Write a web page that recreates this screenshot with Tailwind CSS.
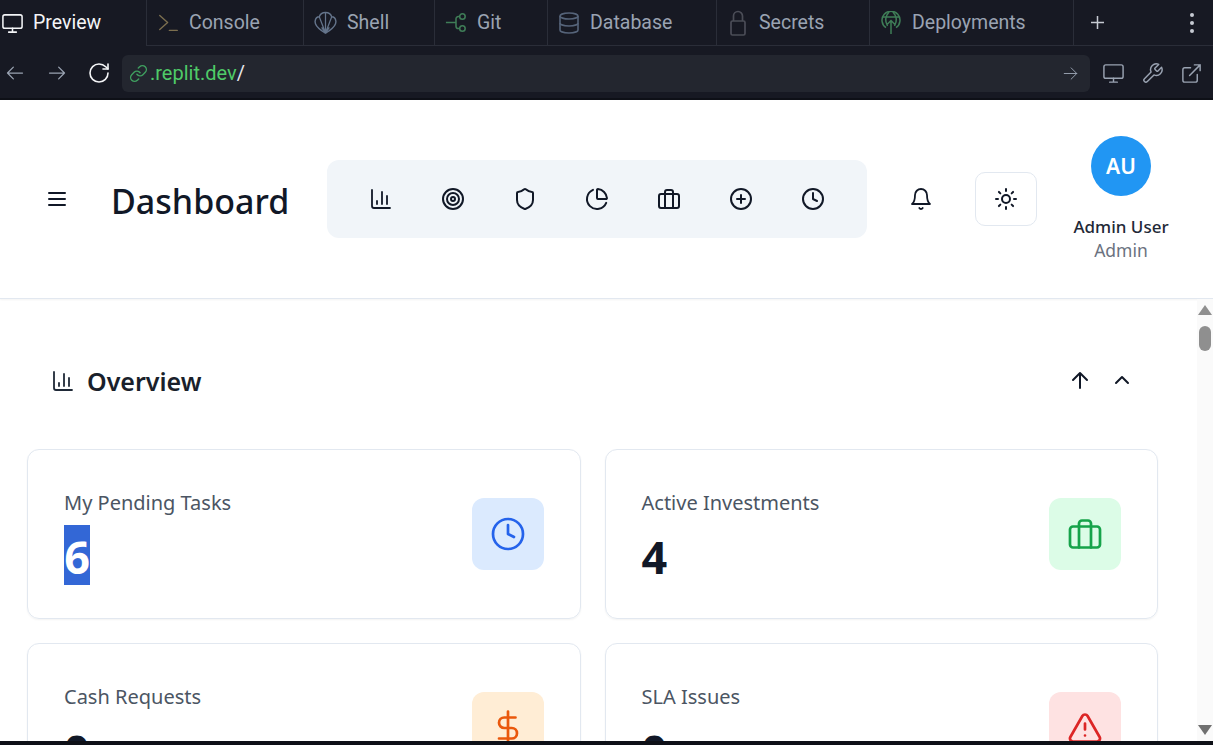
<!DOCTYPE html>
<html lang="en">
<head>
  <meta charset="UTF-8">
  <meta name="viewport" content="width=device-width, initial-scale=1.0">
  <title>Dashboard</title>
  <script src="https://cdn.jsdelivr.net/npm/@tailwindcss/browser@4"></script>
</head>
<body class="bg-white font-['Noto_Sans',sans-serif]">
  <div class="w-[1213px] h-[745px] flex flex-col overflow-hidden">

    <!-- Tabs -->
    <div class="h-[46px] shrink-0 flex bg-[#171923] text-[19.5px] text-[#9aa3b2] font-['Roboto',sans-serif]">
      <div class="w-[147px] flex items-center gap-[9px] pl-[1px] text-[#f4f5f7] border-r border-[#2a2d38]">
        <svg class="w-[23px] h-[23px]" viewBox="0 0 24 24" fill="none" stroke="currentColor" stroke-width="1.6" stroke-linecap="round" stroke-linejoin="round"><rect x="2" y="3" width="20" height="14" rx="2"/><path d="M8 21h8M12 17v4"/></svg>
        Preview
      </div>
      <div class="w-[157px] flex items-center gap-[10px] pl-[11px] border-r border-b border-[#2a2d38]">
        <svg class="w-[21px] h-[21px] text-[#7c6f4f]" viewBox="0 0 24 24" fill="none" stroke="currentColor" stroke-width="1.6" stroke-linecap="round" stroke-linejoin="round"><path d="M2 4l9 8-9 8M13 21h9"/></svg>
        Console
      </div>
      <div class="w-[131px] flex items-center gap-[10px] pl-[10px] border-r border-b border-[#2a2d38]">
        <svg class="w-[23px] h-[23px] text-[#64748b]" viewBox="0 0 24 24" fill="none" stroke="currentColor" stroke-width="1.5" stroke-linejoin="round"><path d="M12 23l-4-2.500C3 17 .800 13.500 1.200 10.500 1.600 7.500 3.500 6 5.500 6 6.300 3.200 9 1.500 12 1.500s5.700 1.700 6.500 4.500c2 0 3.900 1.500 4.300 4.500.4 3-1.800 6.500-6.800 10z"/><path d="M12 23L5.500 6M12 23V1.500M12 23l6.500-17M12 23l-4-6M12 23l4-6" stroke-width="1.300"/></svg>
        Shell
      </div>
      <div class="w-[113px] flex items-center gap-[10px] pl-[10px] border-r border-b border-[#2a2d38]">
        <svg class="w-[22px] h-[23px] text-[#3f7d57]" viewBox="0 0 24 24" fill="none" stroke="currentColor" stroke-width="1.700"><circle cx="19" cy="5.500" r="3"/><circle cx="19" cy="18.500" r="3"/><path d="M1 12h11M16 5.500h-1.500a2.500 2.500 0 0 0-2.500 2.500v8a2.500 2.500 0 0 0 2.500 2.500H16"/></svg>
        Git
      </div>
      <div class="w-[169px] flex items-center gap-[9px] pl-[9px] border-r border-b border-[#2a2d38]">
        <svg class="w-[24px] h-[26px] text-[#56647a]" viewBox="0 0 24 24" fill="none" stroke="currentColor" stroke-width="1.6"><ellipse cx="12" cy="5" rx="9" ry="3"/><path d="M3 5v14a9 3 0 0 0 18 0V5"/><path d="M3 12a9 3 0 0 0 18 0"/></svg>
        Database
      </div>
      <div class="w-[153px] flex items-center gap-[13px] pl-[13px] border-r border-b border-[#2a2d38]">
        <svg class="w-[16px] h-[26px] text-[#4b4d57]" viewBox="0 0 16 26" fill="none" stroke="currentColor" stroke-width="1.7"><rect x="1" y="11" width="14" height="14" rx="1.500"/><path d="M3.500 11V6a4.500 4.500 0 0 1 9 0v5"/></svg>
        Secrets
      </div>
      <div class="w-[204px] flex items-center gap-[11px] pl-[11px] border-r border-b border-[#2a2d38]">
        <svg class="w-[20px] h-[24px] text-[#3f7d57]" viewBox="0 0 20 24" fill="none" stroke="currentColor" stroke-width="1.500"><path d="M5 16.700A9 9 0 1 1 15 16.700"/><path d="M1.500 6h17M10 23V9.500M5.500 14L10 9.500l4.500 4.500M6.500 15c-2.500-4.500-2-10 1.500-14M13.500 15c2.500-4.500 2-10-1.500-14"/></svg>
        Deployments
      </div>
      <div class="flex-1 flex items-center justify-between pl-[16px] pr-[19px] border-b border-[#2a2d38]">
        <svg class="w-[15px] h-[15px] text-[#c6cad2]" viewBox="0 0 15 15" fill="none" stroke="currentColor" stroke-width="1.500"><path d="M7.500 1v13M1 7.500h13"/></svg>
        <div class="flex flex-col gap-[4px]">
          <span class="w-[4px] h-[4px] rounded-full bg-[#c6cad2]"></span>
          <span class="w-[4px] h-[4px] rounded-full bg-[#c6cad2]"></span>
          <span class="w-[4px] h-[4px] rounded-full bg-[#c6cad2]"></span>
        </div>
      </div>
    </div>

    <!-- Address bar -->
    <div class="h-[54px] shrink-0 flex items-center pt-[2px] bg-[#171923] border-b-2 border-[#0e1017] text-[#9aa3b2]">
      <div class="w-[122px] flex items-center shrink-0">
        <svg class="w-[20px] h-[20px] ml-[5px]" viewBox="0 0 24 24" fill="none" stroke="currentColor" stroke-width="1.500" stroke-linecap="round" stroke-linejoin="round"><path d="M21 12H3M10 5l-7 7 7 7"/></svg>
        <svg class="w-[20px] h-[20px] ml-[22px]" viewBox="0 0 24 24" fill="none" stroke="currentColor" stroke-width="1.500" stroke-linecap="round" stroke-linejoin="round"><path d="M3 12h18M14 5l7 7-7 7"/></svg>
        <svg class="w-[24px] h-[24px] ml-[20px] text-[#f4f5f7]" viewBox="0 0 24 24" fill="none" stroke="currentColor" stroke-width="1.600" stroke-linecap="round" stroke-linejoin="round"><path d="M21 12a9 9 0 1 1-9-9c2.520 0 4.930 1 6.740 2.740L21 8"/><path d="M21 3v5h-5"/></svg>
      </div>
      <div class="w-[968px] h-[37px] shrink-0 flex items-center rounded-[6px] bg-[#23262f] pl-[7px] pr-[12px] text-[20px] font-['Roboto',sans-serif]">
        <svg class="w-[19px] h-[19px] text-[#3f9e5f] mr-[2px]" viewBox="0 0 24 24" fill="none" stroke="currentColor" stroke-width="1.800" stroke-linecap="round" stroke-linejoin="round"><path d="M10 13a5 5 0 0 0 7.540.540l3-3a5 5 0 0 0-7.070-7.070l-1.720 1.710"/><path d="M14 11a5 5 0 0 0-7.540-.540l-3 3a5 5 0 0 0 7.070 7.070l1.710-1.710"/></svg>
        <span class="text-[#4fcb68]">.replit.dev</span><span class="text-[#e5e7eb]">/</span>
        <svg class="w-[15px] h-[15px] ml-auto" viewBox="0 0 24 24" fill="none" stroke="currentColor" stroke-width="1.500" stroke-linecap="round" stroke-linejoin="round"><path d="M2 12h20M13 3l9 9-9 9"/></svg>
      </div>
      <div class="flex items-center ml-[12px] gap-[16px]">
        <svg class="w-[23px] h-[23px]" viewBox="0 0 24 24" fill="none" stroke="currentColor" stroke-width="1.500" stroke-linecap="round" stroke-linejoin="round"><rect x="2" y="3" width="20" height="14" rx="2"/><path d="M8 21h8M12 17v4"/></svg>
        <svg class="w-[23px] h-[23px]" viewBox="0 0 24 24" fill="none" stroke="currentColor" stroke-width="1.500" stroke-linecap="round" stroke-linejoin="round"><path d="M14.700 6.300a1 1 0 0 0 0 1.400l1.600 1.600a1 1 0 0 0 1.400 0l3.770-3.770a6 6 0 0 1-7.940 7.940l-6.910 6.910a2.120 2.120 0 0 1-3-3l6.910-6.910a6 6 0 0 1 7.940-7.940l-3.760 3.760z"/></svg>
        <svg class="w-[23px] h-[23px]" viewBox="0 0 24 24" fill="none" stroke="currentColor" stroke-width="1.500" stroke-linecap="round" stroke-linejoin="round"><path d="M18 13v6a2 2 0 0 1-2 2H5a2 2 0 0 1-2-2V8a2 2 0 0 1 2-2h6"/><path d="M15 3h6v6M10 14L21 3"/></svg>
      </div>
    </div>

    <!-- App header -->
    <header class="h-[199px] shrink-0 flex items-center border-b border-[#e2e8f0] shadow-[0_1px_2px_rgba(0,0,0,0.05)] bg-white text-[#111827]">
      <svg class="w-[24px] h-[24px] ml-[45px] shrink-0" viewBox="0 0 24 24" fill="none" stroke="currentColor" stroke-width="2" stroke-linecap="round"><path d="M4 6h16M4 12h16M4 18h16"/></svg>
      <h1 class="w-[215px] ml-[43px] mt-[4px] shrink-0 -indent-[1px] text-[34px] font-medium text-[#111827] leading-none">Dashboard</h1>
      <nav class="w-[540px] h-[78px] shrink-0 flex items-center justify-between px-[42px] rounded-[12px] bg-[#f1f5f9]">
        <svg class="w-[24px] h-[24px]" viewBox="0 0 24 24" fill="none" stroke="currentColor" stroke-width="1.800" stroke-linecap="round" stroke-linejoin="round"><path d="M3 3v16a2 2 0 0 0 2 2h16"/><path d="M18 17V9M13 17V5M8 17v-3"/></svg>
        <svg class="w-[24px] h-[24px]" viewBox="0 0 24 24" fill="none" stroke="currentColor" stroke-width="2"><circle cx="12" cy="12" r="10"/><circle cx="12" cy="12" r="6"/><circle cx="12" cy="12" r="2"/></svg>
        <svg class="w-[24px] h-[24px]" viewBox="0 0 24 24" fill="none" stroke="currentColor" stroke-width="2" stroke-linecap="round" stroke-linejoin="round"><path d="M20 13c0 5-3.500 7.500-7.660 8.950a1 1 0 0 1-.67-.010C7.500 20.500 4 18 4 13V6a1 1 0 0 1 1-1c2 0 4.500-1.200 6.240-2.720a1.170 1.170 0 0 1 1.520 0C14.510 3.810 17 5 19 5a1 1 0 0 1 1 1z"/></svg>
        <svg class="w-[24px] h-[24px]" viewBox="0 0 24 24" fill="none" stroke="currentColor" stroke-width="2" stroke-linecap="round" stroke-linejoin="round"><path d="M21 12c.552 0 1.005-.449.950-.998a10 10 0 0 0-8.953-8.951c-.550-.055-.998.398-.998.950v8a1 1 0 0 0 1 1z"/><path d="M21.210 15.890A10 10 0 1 1 8 2.830"/></svg>
        <svg class="w-[24px] h-[24px]" viewBox="0 0 24 24" fill="none" stroke="currentColor" stroke-width="2" stroke-linecap="round" stroke-linejoin="round"><rect x="2" y="7" width="20" height="14" rx="2"/><path d="M16 21V5a2 2 0 0 0-2-2h-4a2 2 0 0 0-2 2v16"/></svg>
        <svg class="w-[24px] h-[24px]" viewBox="0 0 24 24" fill="none" stroke="currentColor" stroke-width="2" stroke-linecap="round"><circle cx="12" cy="12" r="10"/><path d="M8 12h8M12 8v8"/></svg>
        <svg class="w-[24px] h-[24px]" viewBox="0 0 24 24" fill="none" stroke="currentColor" stroke-width="2" stroke-linecap="round" stroke-linejoin="round"><circle cx="12" cy="12" r="10"/><path d="M12 6v6l4 2"/></svg>
      </nav>
      <svg class="w-[24px] h-[24px] ml-[42px] shrink-0" viewBox="0 0 24 24" fill="none" stroke="currentColor" stroke-width="1.800" stroke-linecap="round" stroke-linejoin="round"><path d="M6 8a6 6 0 0 1 12 0c0 7 3 9 3 9H3s3-2 3-9"/><path d="M10.300 21a1.940 1.940 0 0 0 3.400 0"/></svg>
      <div class="w-[62px] h-[54px] ml-[42px] shrink-0 flex items-center justify-center rounded-[10px] border border-[#e2e8f0]">
        <svg class="w-[24px] h-[24px]" viewBox="0 0 24 24" fill="none" stroke="currentColor" stroke-width="2" stroke-linecap="round"><circle cx="12" cy="12" r="4"/><path d="M12 2v2M12 20v2M4.930 4.930l1.410 1.410M17.660 17.660l1.410 1.410M2 12h2M20 12h2M6.340 17.660l-1.410 1.410M19.070 4.930l-1.410 1.410"/></svg>
      </div>
      <div class="w-[120px] ml-[24px] shrink-0 flex flex-col items-center">
        <div class="w-[60px] h-[60px] rounded-full bg-[#2196f3] text-white flex items-center justify-center pt-[2px] text-[21px] font-semibold">AU</div>
        <div class="mt-[19px] text-[17px] font-medium leading-[24px] text-[#1f2937]">Admin User</div>
        <div class="text-[17.5px] leading-[23px] mb-[1px] text-[#6b7280]">Admin</div>
      </div>
    </header>

    <!-- Page body -->
    <div class="flex-1 min-h-0 flex">
      <main class="flex-1 min-w-0 overflow-hidden pl-[27px]">
        <div class="w-[1131px] flex items-center h-[48px] mt-[58px] pl-[24px] pr-[23px]">
          <svg class="w-[24px] h-[24px] shrink-0 text-[#1f2937]" viewBox="0 0 24 24" fill="none" stroke="currentColor" stroke-width="1.800" stroke-linecap="round" stroke-linejoin="round"><path d="M3 3v16a2 2 0 0 0 2 2h16"/><path d="M18 17V9M13 17V5M8 17v-3"/></svg>
          <h2 class="ml-[12px] text-[25px] font-semibold leading-[48px] text-[#1a1f2b]">Overview</h2>
          <svg class="w-[24px] h-[24px] ml-auto mr-[18px] mb-[2px] text-[#111827]" viewBox="0 0 24 24" fill="none" stroke="currentColor" stroke-width="2" stroke-linecap="round" stroke-linejoin="round"><path d="M12 20V5M5 12l7-7 7 7"/></svg>
          <svg class="w-[24px] h-[24px] mr-[1px] mb-[2px] text-[#111827]" viewBox="0 0 24 24" fill="none" stroke="currentColor" stroke-width="2" stroke-linecap="round" stroke-linejoin="round"><path d="M6 15l6-6 6 6"/></svg>
        </div>

        <div class="w-[1131px] grid grid-cols-2 gap-x-[24px] gap-y-[24px] mt-[44px]">
          <div class="h-[170px] flex justify-between pl-[36px] pr-[36px] rounded-[12px] border border-[#e2e8f0] shadow-[0_1px_2px_rgba(0,0,0,0.05)]">
            <div class="pt-[39px]">
              <div class="text-[20px] leading-[28px] text-[#4b5563]">My Pending Tasks</div>
              <div class="mt-[8px] w-[26px] h-[60px] bg-[#3367d6] text-white text-[45px] font-bold leading-[64px] text-center">6</div>
            </div>
            <div class="w-[72px] h-[72px] mt-[48px] rounded-[12px] bg-[#dbeafe] text-[#2563eb] flex items-center justify-center">
              <svg class="w-[36px] h-[36px]" viewBox="0 0 24 24" fill="none" stroke="currentColor" stroke-width="1.800" stroke-linecap="round" stroke-linejoin="round"><circle cx="12" cy="12" r="10"/><path d="M12 6v6l4 2"/></svg>
            </div>
          </div>
          <div class="h-[170px] flex justify-between pl-[36px] pr-[36px] rounded-[12px] border border-[#e2e8f0] shadow-[0_1px_2px_rgba(0,0,0,0.05)]">
            <div class="pt-[39px]">
              <div class="text-[20px] leading-[28px] text-[#4b5563]">Active Investments</div>
              <div class="mt-[8px] h-[60px] text-[#111827] text-[45px] font-bold leading-[64px]">4</div>
            </div>
            <div class="w-[72px] h-[72px] mt-[48px] rounded-[12px] bg-[#dcfce7] text-[#16a34a] flex items-center justify-center">
              <svg class="w-[36px] h-[36px]" viewBox="0 0 24 24" fill="none" stroke="currentColor" stroke-width="1.800" stroke-linecap="round" stroke-linejoin="round"><rect x="2" y="7" width="20" height="14" rx="2"/><path d="M16 21V5a2 2 0 0 0-2-2h-4a2 2 0 0 0-2 2v16"/></svg>
            </div>
          </div>
          <div class="h-[170px] flex justify-between pl-[36px] pr-[36px] rounded-[12px] border border-[#e2e8f0] shadow-[0_1px_2px_rgba(0,0,0,0.05)]">
            <div class="pt-[39px]">
              <div class="text-[20px] leading-[28px] text-[#4b5563]">Cash Requests</div>
              <div class="mt-[8px] h-[60px] text-[#111827] text-[45px] font-bold leading-[64px]">0</div>
            </div>
            <div class="w-[72px] h-[72px] mt-[48px] rounded-[12px] bg-[#ffedd5] text-[#ea580c] flex items-center justify-center">
              <svg class="w-[36px] h-[36px]" viewBox="0 0 24 24" fill="none" stroke="currentColor" stroke-width="1.800" stroke-linecap="round" stroke-linejoin="round"><path d="M12 1v22M17 5H9.500a3.500 3.500 0 0 0 0 7h5a3.500 3.500 0 0 1 0 7H6"/></svg>
            </div>
          </div>
          <div class="h-[170px] flex justify-between pl-[36px] pr-[36px] rounded-[12px] border border-[#e2e8f0] shadow-[0_1px_2px_rgba(0,0,0,0.05)]">
            <div class="pt-[39px]">
              <div class="text-[20px] leading-[28px] text-[#4b5563]">SLA Issues</div>
              <div class="mt-[8px] h-[60px] text-[#111827] text-[45px] font-bold leading-[64px]">0</div>
            </div>
            <div class="w-[72px] h-[72px] mt-[48px] rounded-[12px] bg-[#fee2e2] text-[#dc2626] flex items-center justify-center">
              <svg class="w-[36px] h-[36px]" viewBox="0 0 24 24" fill="none" stroke="currentColor" stroke-width="1.800" stroke-linecap="round" stroke-linejoin="round"><path d="M21.730 18l-8-14a2 2 0 0 0-3.480 0l-8 14A2 2 0 0 0 4 21h16a2 2 0 0 0 1.730-3"/><path d="M12 9v4M12 17h.010"/></svg>
            </div>
          </div>
        </div>
      </main>

      <!-- Scrollbar -->
      <div class="w-[16px] shrink-0 bg-[#fafafa] flex flex-col items-center pt-[6px] pb-[6px]">
        <div class="w-0 h-0 border-x-[7px] border-x-transparent border-b-[10px] border-b-[#8f8f8f]"></div>
        <div class="w-[12px] h-[25px] mt-[11px] rounded-full bg-[#8f8f8f]"></div>
        <div class="mt-auto w-0 h-0 border-x-[7px] border-x-transparent border-t-[10px] border-t-[#707070]"></div>
      </div>
    </div>

    <div class="h-[4px] shrink-0 bg-[#0e1017]"></div>
  </div>
</body>
</html>
